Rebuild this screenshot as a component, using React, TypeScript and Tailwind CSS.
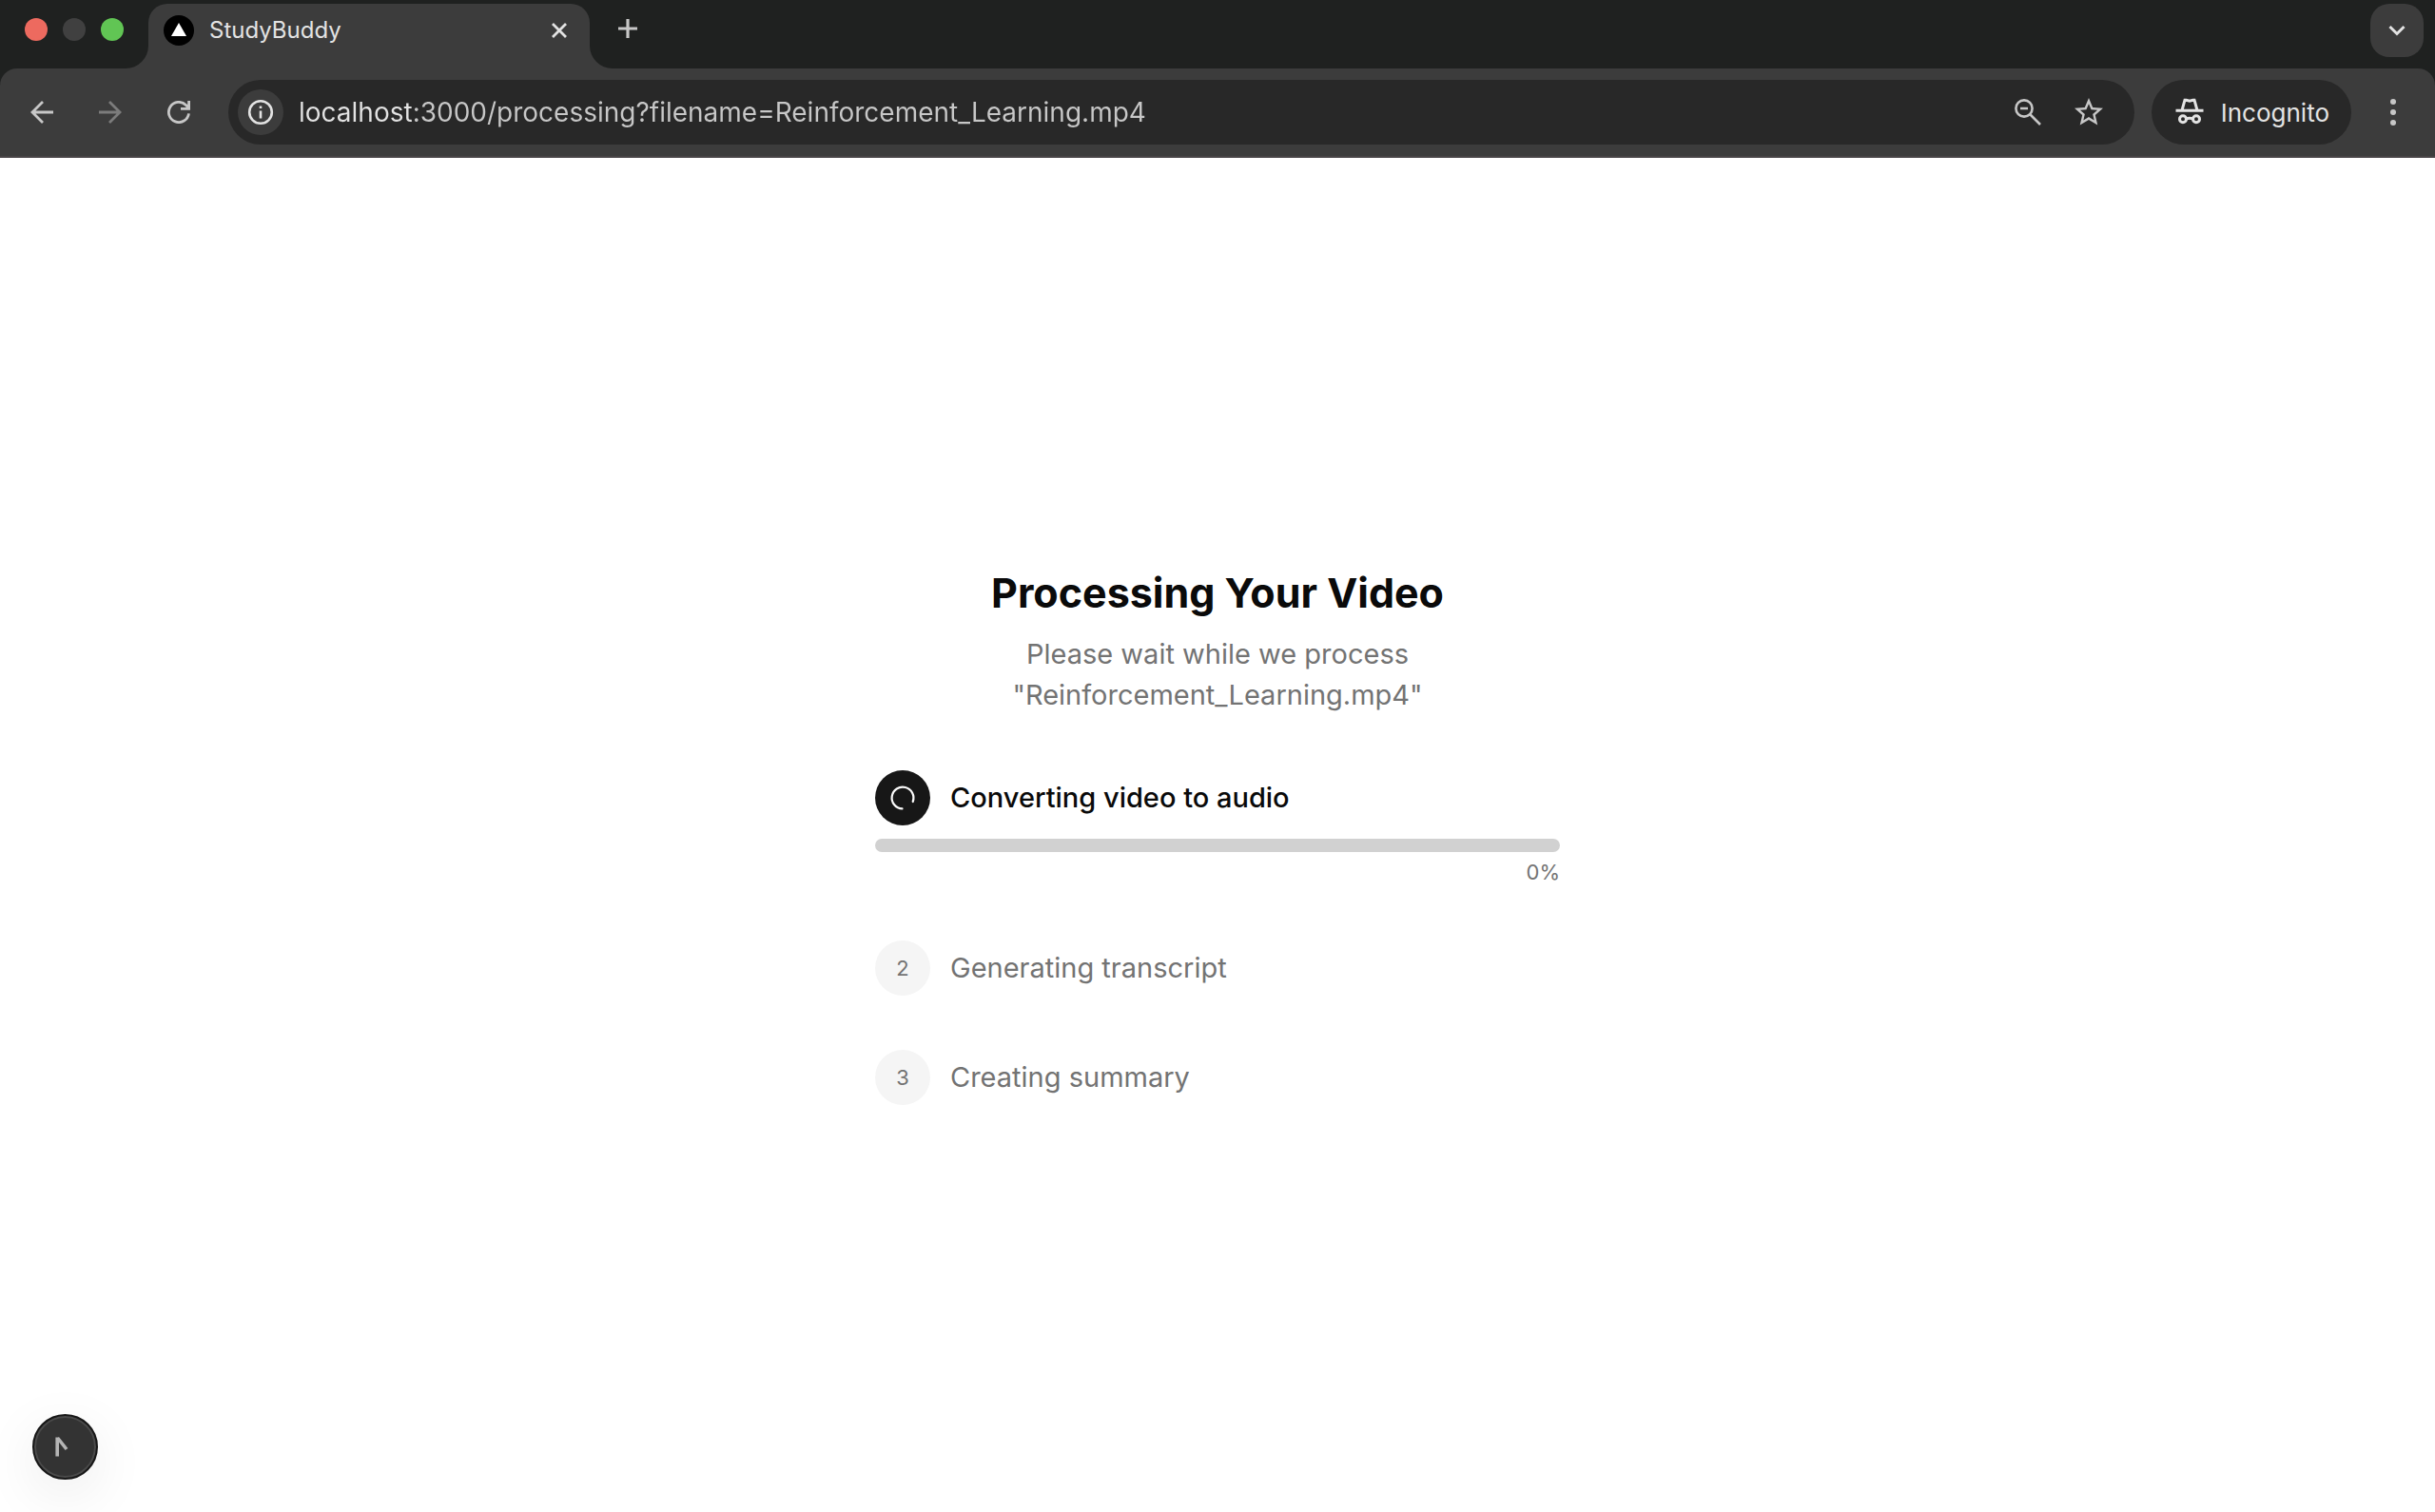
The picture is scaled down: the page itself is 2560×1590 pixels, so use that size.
const steps = [
  { id: 1, label: "Converting video to audio", active: true, progress: 0 },
  { id: 2, label: "Generating transcript", active: false, progress: 0 },
  { id: 3, label: "Creating summary", active: false, progress: 0 },
];

function TabStrip() {
  return (
    <div className="flex h-[72px] items-start bg-[#1f2120] pr-3">
      <div className="flex h-[62px] items-center gap-4 pr-[14px] pl-[26px]">
        <button aria-label="Close window" className="size-6 rounded-full bg-[#ed6a5f]" />
        <button aria-label="Minimize window" className="size-6 rounded-full bg-[#404040]" />
        <button aria-label="Zoom window" className="size-6 rounded-full bg-[#61c554]" />
      </div>
      <div className="mt-1 -ml-3 flex h-[68px]">
        <svg className="size-6 self-end text-[#3c3c3c]" viewBox="0 0 24 24" aria-hidden="true">
          <path d="M24 0v24H0A24 24 0 0 0 24 0Z" fill="currentColor" />
        </svg>
        <div className="flex w-[464px] items-start rounded-t-[20px] bg-[#3c3c3c] pt-3 pr-4 pl-4">
          <svg className="size-8 shrink-0" viewBox="0 0 32 32" aria-hidden="true">
            <circle cx="16" cy="16" r="16" fill="#000" />
            <path d="M16 8 24 22H8Z" fill="#fff" />
          </svg>
          <span className="ml-4 flex-1 text-[24px] leading-8 text-[#e3e3e3]">StudyBuddy</span>
          <button aria-label="Close tab" className="flex size-8 items-center justify-center text-[#e3e3e3]">
            <svg className="size-4" viewBox="0 0 16 16" fill="none" stroke="currentColor" strokeWidth="2.8" aria-hidden="true">
              <path d="M1 1l14 14M15 1 1 15" />
            </svg>
          </button>
        </div>
        <svg className="size-6 self-end text-[#3c3c3c]" viewBox="0 0 24 24" aria-hidden="true">
          <path d="M0 0v24h24A24 24 0 0 1 0 0Z" fill="currentColor" />
        </svg>
      </div>
      <button aria-label="New tab" className="flex h-[60px] w-8 items-center justify-center text-[#c7c7c7]">
        <svg className="size-5" viewBox="0 0 20 20" fill="none" stroke="currentColor" strokeWidth="3.2" aria-hidden="true">
          <path d="M10 0v20M0 10h20" />
        </svg>
      </button>
      <button aria-label="Search tabs" className="mt-1 ml-auto flex size-14 items-center justify-center rounded-[20px] bg-[#3c3c3c] text-[#e3e3e3]">
        <svg className="size-5" viewBox="0 0 20 20" fill="none" stroke="currentColor" strokeWidth="3" aria-hidden="true">
          <path d="M2.500 6 10 13.500 17.500 6" />
        </svg>
      </button>
    </div>
  );
}

function Toolbar() {
  return (
    <div className="bg-[#1f2120]">
      <div className="flex h-[94px] items-center rounded-t-[18px] border-b-2 border-[#484446] bg-[#3c3c3c] pr-7 pl-5">
        <div className="flex gap-6 text-[#c7c7c7]">
          <button aria-label="Back" className="flex size-12 items-center justify-center">
            <svg className="size-6" viewBox="0 0 24 24" fill="none" stroke="currentColor" strokeWidth="2.800" aria-hidden="true">
              <path d="M24 12H2M13 1 2 12l11 11" />
            </svg>
          </button>
          <button aria-label="Forward" className="flex size-12 items-center justify-center text-[#7c7c7c]">
            <svg className="size-6" viewBox="0 0 24 24" fill="none" stroke="currentColor" strokeWidth="2.800" aria-hidden="true">
              <path d="M0 12h22M11 1l11 11-11 11" />
            </svg>
          </button>
          <button aria-label="Reload" className="flex size-12 items-center justify-center">
            <svg className="size-6" viewBox="0 0 24 24" fill="none" stroke="currentColor" strokeWidth="2.800" aria-hidden="true">
              <path d="M22.500 13.400A10.600 10.600 0 1 1 19.500 4.500L22.600 7.800M22.600 0v8.400h-8.600" />
            </svg>
          </button>
        </div>
        <div className="ml-7 flex h-[68px] min-w-0 flex-1 items-center rounded-full bg-[#282828] pr-6 pl-[10px] text-[#c7c7c7]">
          <button aria-label="View site information" className="flex size-12 shrink-0 items-center justify-center rounded-full bg-[#3c3c3c] text-[#e3e3e3]">
            <svg className="size-7" viewBox="0 0 28 28" fill="none" stroke="currentColor" strokeWidth="2.600" aria-hidden="true">
              <circle cx="14" cy="14" r="11.8" />
              <path d="M14 12.500v8M14 7.400v2.600" />
            </svg>
          </button>
          <input
            aria-label="Address"
            readOnly
            value="localhost:3000/processing?filename=Reinforcement_Learning.mp4"
            className="ml-4 h-12 min-w-0 flex-1 bg-[linear-gradient(to_right,#e3e3e3_120px,#c7c7c7_120px)] bg-clip-text text-[28px] text-transparent outline-none"
          />
          <div className="flex gap-4">
            <button aria-label="Zoom" className="flex size-12 items-center justify-center">
              <svg className="size-7" viewBox="0 0 28 28" fill="none" stroke="currentColor" strokeWidth="2.600" aria-hidden="true">
                <circle cx="10" cy="10" r="8.600" />
                <path d="M16.500 16.500l10.500 10.500M6 10h8" />
              </svg>
            </button>
            <button aria-label="Bookmark this tab" className="flex size-12 items-center justify-center">
              <svg className="size-9" viewBox="0 0 24 24" fill="currentColor" aria-hidden="true">
                <path d="m22 9.240-7.190-.62L12 2 9.190 8.630 2 9.240l5.460 4.730L5.820 21 12 17.270 18.180 21l-1.630-7.030L22 9.240zM12 15.400l-3.760 2.270 1-4.280-3.320-2.880 4.380-.38L12 6.100l1.710 4.040 4.380.38-3.320 2.880 1 4.280L12 15.400z" />
              </svg>
            </button>
          </div>
        </div>
        <div className="ml-[18px] flex h-[68px] items-center gap-[18px] rounded-full bg-[#282828] pr-[23px] pl-[25px] text-[26px] text-[#e3e3e3]">
          <svg className="h-7 w-[30px] overflow-visible" viewBox="0 0 30 28" fill="none" stroke="currentColor" strokeWidth="3" aria-hidden="true">
            <path d="M.5 12.300h29M7 12 10 1.200h1.500l3.500 1 3.500-1H20L23 12" />
            <circle cx="8" cy="21.200" r="3.500" />
            <circle cx="22" cy="21.200" r="3.500" />
            <path d="M11.500 20.800q3.500-1 7 0" />
          </svg>
          <span>Incognito</span>
        </div>
        <button aria-label="Menu" className="ml-7 flex h-12 w-8 items-center justify-center text-[#c7c7c7]">
          <svg className="h-7 w-[6px]" viewBox="0 0 6 28" fill="currentColor" aria-hidden="true">
            <circle cx="3" cy="3" r="3" />
            <circle cx="3" cy="14" r="3" />
            <circle cx="3" cy="25" r="3" />
          </svg>
        </button>
      </div>
    </div>
  );
}

function Steps() {
  return (
    <ol className="mt-[58px] flex flex-col gap-[57px]">
      {steps.map((step) => (
        <li key={step.id}>
          <div className="flex items-center gap-[21px]">
            {step.active ? (
              <span className="flex size-[58px] items-center justify-center rounded-full bg-[#171717] text-[#fafafa]">
                <svg className="size-7" viewBox="0 0 28 28" fill="none" stroke="currentColor" strokeWidth="2.200" strokeLinecap="round" aria-hidden="true">
                  <path d="M13.500 25.400A11.400 11.400 0 1 1 24.700 18" />
                </svg>
              </span>
            ) : (
              <span className="flex size-[58px] items-center justify-center rounded-full bg-[#f5f5f5] text-[22px] text-[#737373]">
                {step.id}
              </span>
            )}
            <span className={step.active ? "text-[29px] font-medium text-[#0a0a0a]" : "text-[29px] text-[#737373]"}>
              {step.label}
            </span>
          </div>
          {step.active && (
            <div className="mt-[14px]">
              <div
                role="progressbar"
                aria-label={step.label}
                aria-valuenow={step.progress}
                className="h-[14px] overflow-hidden rounded-full bg-[#d1d1d1]"
              >
                <div className="h-full bg-[#171717]" style={{ width: `${step.progress}%` }} />
              </div>
              <p className="mt-[7px] text-right text-[22px] leading-[29px] text-[#737373]">{step.progress}%</p>
            </div>
          )}
        </li>
      ))}
    </ol>
  );
}

export default function App() {
  return (
    <div className="flex min-h-screen flex-col bg-white font-['Inter',sans-serif]">
      <header>
        <TabStrip />
        <Toolbar />
      </header>
      <main className="flex flex-1 flex-col items-center justify-center">
        <div className="w-full max-w-[720px]">
          <h1 className="text-center text-[43px] leading-[58px] font-bold text-[#0a0a0a]">Processing Your Video</h1>
          <p className="mx-auto mt-[14px] max-w-[500px] text-center text-[29px] leading-[43px] text-[#737373]">
            Please wait while we process "Reinforcement_Learning.mp4"
          </p>
          <Steps />
        </div>
      </main>
      <button
        aria-label="Open Next.js Dev Tools"
        className="fixed bottom-[34px] left-[34px] flex size-[69px] items-center justify-center rounded-full border-2 border-[#171717] bg-[#333333] shadow-[0_16px_58px_rgba(0,0,0,0.08)] ring-2 ring-[#4a4a4a] ring-inset"
      >
        <svg className="size-10" viewBox="0 0 40 40" fill="none" stroke="#b5b5b5" strokeWidth="3.600" aria-hidden="true">
          <path d="M11.200 9.500v20M11.500 10l9.500 12" />
        </svg>
      </button>
    </div>
  );
}
